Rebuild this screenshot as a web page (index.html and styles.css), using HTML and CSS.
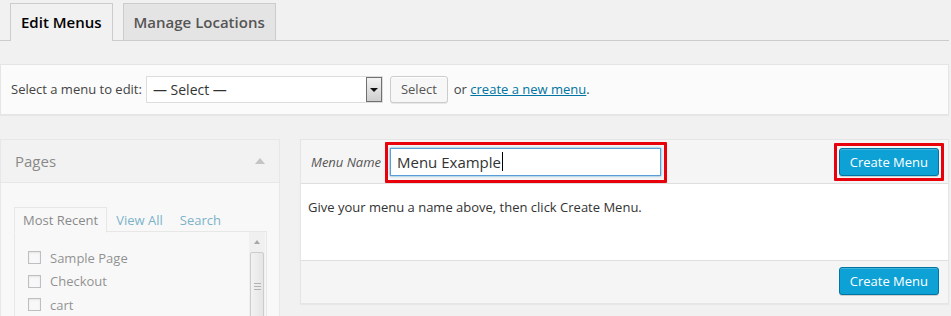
FILE: index.html
```html
<!DOCTYPE html>
<html>
<head>
<meta charset="utf-8">
<link rel="stylesheet" href="styles.css">
</head>
<body>
<div class="wrap">
  <div class="nav-tabs">
    <span class="nav-tab active">Edit Menus</span>
    <span class="nav-tab">Manage Locations</span>
  </div>

  <div class="manage">
    <span class="manage-label">Select a menu to edit:</span>
    <div class="fake-select">
      <span class="fake-select-text">— Select —</span>
      <span class="fake-select-arrow"><span class="tri-down"></span></span>
    </div>
    <span class="btn">Select</span>
    <span class="or">or <a class="link" href="#">create a new menu</a>.</span>
  </div>

  <div class="columns">
    <div class="side">
      <div class="acc">
        <div class="acc-title">
          <span>Pages</span>
          <span class="tri-up-light"></span>
        </div>
        <div class="acc-body">
          <div class="sub-tabs">
            <span class="sub-tab active">Most Recent</span>
            <span class="sub-tab">View All</span>
            <span class="sub-tab">Search</span>
          </div>
          <div class="panel">
            <ul class="checklist">
              <li><span class="cb"></span>Sample Page</li>
              <li><span class="cb"></span>Checkout</li>
              <li><span class="cb"></span>cart</li>
            </ul>
            <div class="scrollbar">
              <div class="sb-up"><span class="tri-up-dark"></span></div>
              <div class="sb-thumb">
                <span class="grip"></span>
              </div>
            </div>
          </div>
        </div>
      </div>
    </div>

    <div class="main">
      <div class="menu-header">
        <div class="name-group">
          <span class="name-label">Menu Name</span>
          <div class="hl hl-input">
            <div class="name-input">Menu Example<span class="caret"></span></div>
          </div>
        </div>
        <div class="hl hl-btn">
          <span class="btn-primary">Create Menu</span>
        </div>
      </div>
      <div class="menu-body">Give your menu a name above, then click Create Menu.</div>
      <div class="menu-footer">
        <span class="btn-primary">Create Menu</span>
      </div>
    </div>
  </div>
</div>
</body>
</html>
```

FILE: styles.css
```css
html, body {
  margin: 0;
  padding: 0;
  background: #f1f1f1;
  font-family: "Open Sans", "Liberation Sans", sans-serif;
  font-size: 13px;
  color: #444;
  overflow: hidden;
}

.wrap {
  padding-right: 2px;
}

/* top tabs */
.nav-tabs {
  display: flex;
  padding: 3px 0 0 10px;
  border-bottom: 1px solid #ccc;
  box-sizing: border-box;
  height: 41px;
}
.nav-tab {
  display: block;
  height: 37px;
  box-sizing: border-box;
  padding: 6px 10px;
  line-height: 24px;
  font-size: 15px;
  font-weight: 600;
  color: #555;
  background: #e4e4e4;
  border: 1px solid #ccc;
  border-bottom: none;
  margin-right: 10px;
}
.nav-tab.active {
  color: #000;
  background: #f1f1f1;
  height: 38px;
}

/* manage box */
.manage {
  margin-top: 23px;
  height: 51px;
  box-sizing: border-box;
  background: #fbfbfb;
  border: 1px solid #e5e5e5;
  box-shadow: 0 1px 1px rgba(0,0,0,.04);
  display: flex;
  align-items: center;
  padding: 0 0 0 10px;
}
.manage-label {
  color: #444;
  margin-right: 4px;
  margin-top: -2px;
}
.fake-select {
  width: 237px;
  height: 27px;
  box-sizing: border-box;
  border: 1px solid #ddd;
  background: #fff;
  display: flex;
  align-items: stretch;
  justify-content: space-between;
}
.fake-select-text {
  font-size: 14px;
  color: #333;
  line-height: 25px;
  padding-left: 6px;
}
.fake-select-arrow {
  width: 16px;
  box-sizing: border-box;
  border: 1px solid #707070;
  background: linear-gradient(#f2f2f2, #cfcfcf);
  display: flex;
  align-items: center;
  justify-content: center;
}
.tri-down {
  width: 0;
  height: 0;
  border-left: 4px solid transparent;
  border-right: 4px solid transparent;
  border-top: 4px solid #111;
}
.btn {
  margin-left: 7px;
  height: 27px;
  box-sizing: border-box;
  padding: 0 10px;
  line-height: 25px;
  border: 1px solid #ccc;
  border-radius: 3px;
  background: #f7f7f7;
  box-shadow: inset 0 1px 0 #fff, 0 1px 0 rgba(0,0,0,.08);
  color: #555;
}
.or {
  margin-left: 6px;
  margin-top: -2px;
  color: #444;
}
.link {
  color: #0074a2;
}

/* columns */
.columns {
  display: flex;
  gap: 20px;
  margin-top: 24px;
  align-items: flex-start;
}
.side {
  width: 280px;
  opacity: 0.5;
}
.acc {
  border: 1px solid #dfdfdf;
  background: #fff;
  height: 200px;
}
.acc-title {
  height: 43px;
  box-sizing: border-box;
  border-bottom: 1px solid #dfdfdf;
  background: #f3f3f3;
  display: flex;
  align-items: center;
  justify-content: space-between;
  padding: 0 14px 0 14px;
  font-size: 15px;
  color: #222;
}
.tri-up-light {
  width: 0;
  height: 0;
  border-left: 5px solid transparent;
  border-right: 5px solid transparent;
  border-bottom: 6px solid #999;
}
.acc-body {
  padding: 24px 12px 0 13px;
}
.sub-tabs {
  display: flex;
  height: 25px;
}
.sub-tab {
  padding: 0 8px 0 9px;
  line-height: 26px;
  color: #0074a2;
  font-size: 13px;
}
.sub-tab.active {
  color: #222;
  background: #fff;
  border: 1px solid #dfdfdf;
  border-bottom: 1px solid #fff;
  padding: 0 8px;
  line-height: 25px;
  height: 26px;
  box-sizing: border-box;
  position: relative;
  z-index: 1;
}
.panel {
  border: 1px solid #dfdfdf;
  margin-top: -1px;
  height: 160px;
  display: flex;
  background: #fff;
}
.checklist {
  list-style: none;
  margin: 0;
  padding: 14px 0 0 13px;
  flex: 1;
}
.checklist li {
  display: flex;
  align-items: center;
  height: 23.5px;
  font-size: 13px;
  color: #333;
}
.cb {
  width: 13px;
  height: 13px;
  box-sizing: border-box;
  border: 1px solid #8c8f94;
  background: #fff;
  box-shadow: inset 0 1px 2px rgba(0,0,0,.15);
  margin-right: 9px;
}
.scrollbar {
  width: 16px;
  margin-right: 1px;
  background: #f0f0f0;
  display: flex;
  flex-direction: column;
}
.sb-up {
  height: 19px;
  display: flex;
  align-items: center;
  justify-content: center;
}
.tri-up-dark {
  width: 0;
  height: 0;
  border-left: 3.5px solid transparent;
  border-right: 3.5px solid transparent;
  border-bottom: 4px solid #606060;
}
.sb-thumb {
  margin: 1px 1px 0 1px;
  flex: 1;
  border: 1px solid #a8a8a8;
  border-radius: 2px;
  background: linear-gradient(90deg, #f4f4f4, #dcdcdc);
  display: flex;
  justify-content: center;
  padding-top: 30px;
}
.grip {
  width: 7px;
  height: 7px;
  background: repeating-linear-gradient(#777 0 1px, transparent 1px 3px);
}

/* main */
.main {
  flex: 1;
  border: 1px solid #e5e5e5;
  background: #fff;
  box-shadow: 0 1px 1px rgba(0,0,0,.04);
}
.menu-header {
  height: 44px;
  box-sizing: border-box;
  background: #f5f5f5;
  border-bottom: 1px solid #dfdfdf;
  display: flex;
  align-items: center;
  justify-content: space-between;
  padding: 0 4px 0 10px;
}
.name-group {
  display: flex;
  align-items: center;
}
.name-label {
  width: 74px;
  font-style: italic;
  color: #555;
  font-size: 13px;
}
.hl {
  border: 3px solid #e8000b;
  border-radius: 1px;
}
.hl-input {
  padding: 3px 3px 4px 2px;
  margin-top: 1px;
}
.hl-btn {
  padding: 2px;
}
.name-input {
  width: 271px;
  height: 28px;
  box-sizing: border-box;
  border: 1px solid #5b9dd9;
  box-shadow: 0 0 2px rgba(30,140,190,.8);
  background: #fff;
  font-size: 15px;
  line-height: 26px;
  padding-left: 6px;
  color: #333;
  display: flex;
  align-items: center;
}
.caret {
  display: inline-block;
  width: 1px;
  height: 19px;
  background: #000;
  margin-left: 1px;
}
.btn-primary {
  display: block;
  height: 28px;
  box-sizing: border-box;
  padding: 0 10px;
  line-height: 26px;
  background: #0ea1d5;
  border: 1px solid #0074a2;
  border-radius: 3px;
  box-shadow: inset 0 1px 0 rgba(120,200,230,.5), 0 1px 0 rgba(0,0,0,.15);
  color: #fff;
  font-size: 13px;
}
.menu-body {
  height: 76px;
  box-sizing: border-box;
  padding: 14px 7px;
  color: #333;
  font-size: 13px;
}
.menu-footer {
  height: 43px;
  box-sizing: border-box;
  background: #f5f5f5;
  border-top: 1px solid #dfdfdf;
  display: flex;
  align-items: center;
  justify-content: flex-end;
  padding: 0 9px 2px 0;
}
```
